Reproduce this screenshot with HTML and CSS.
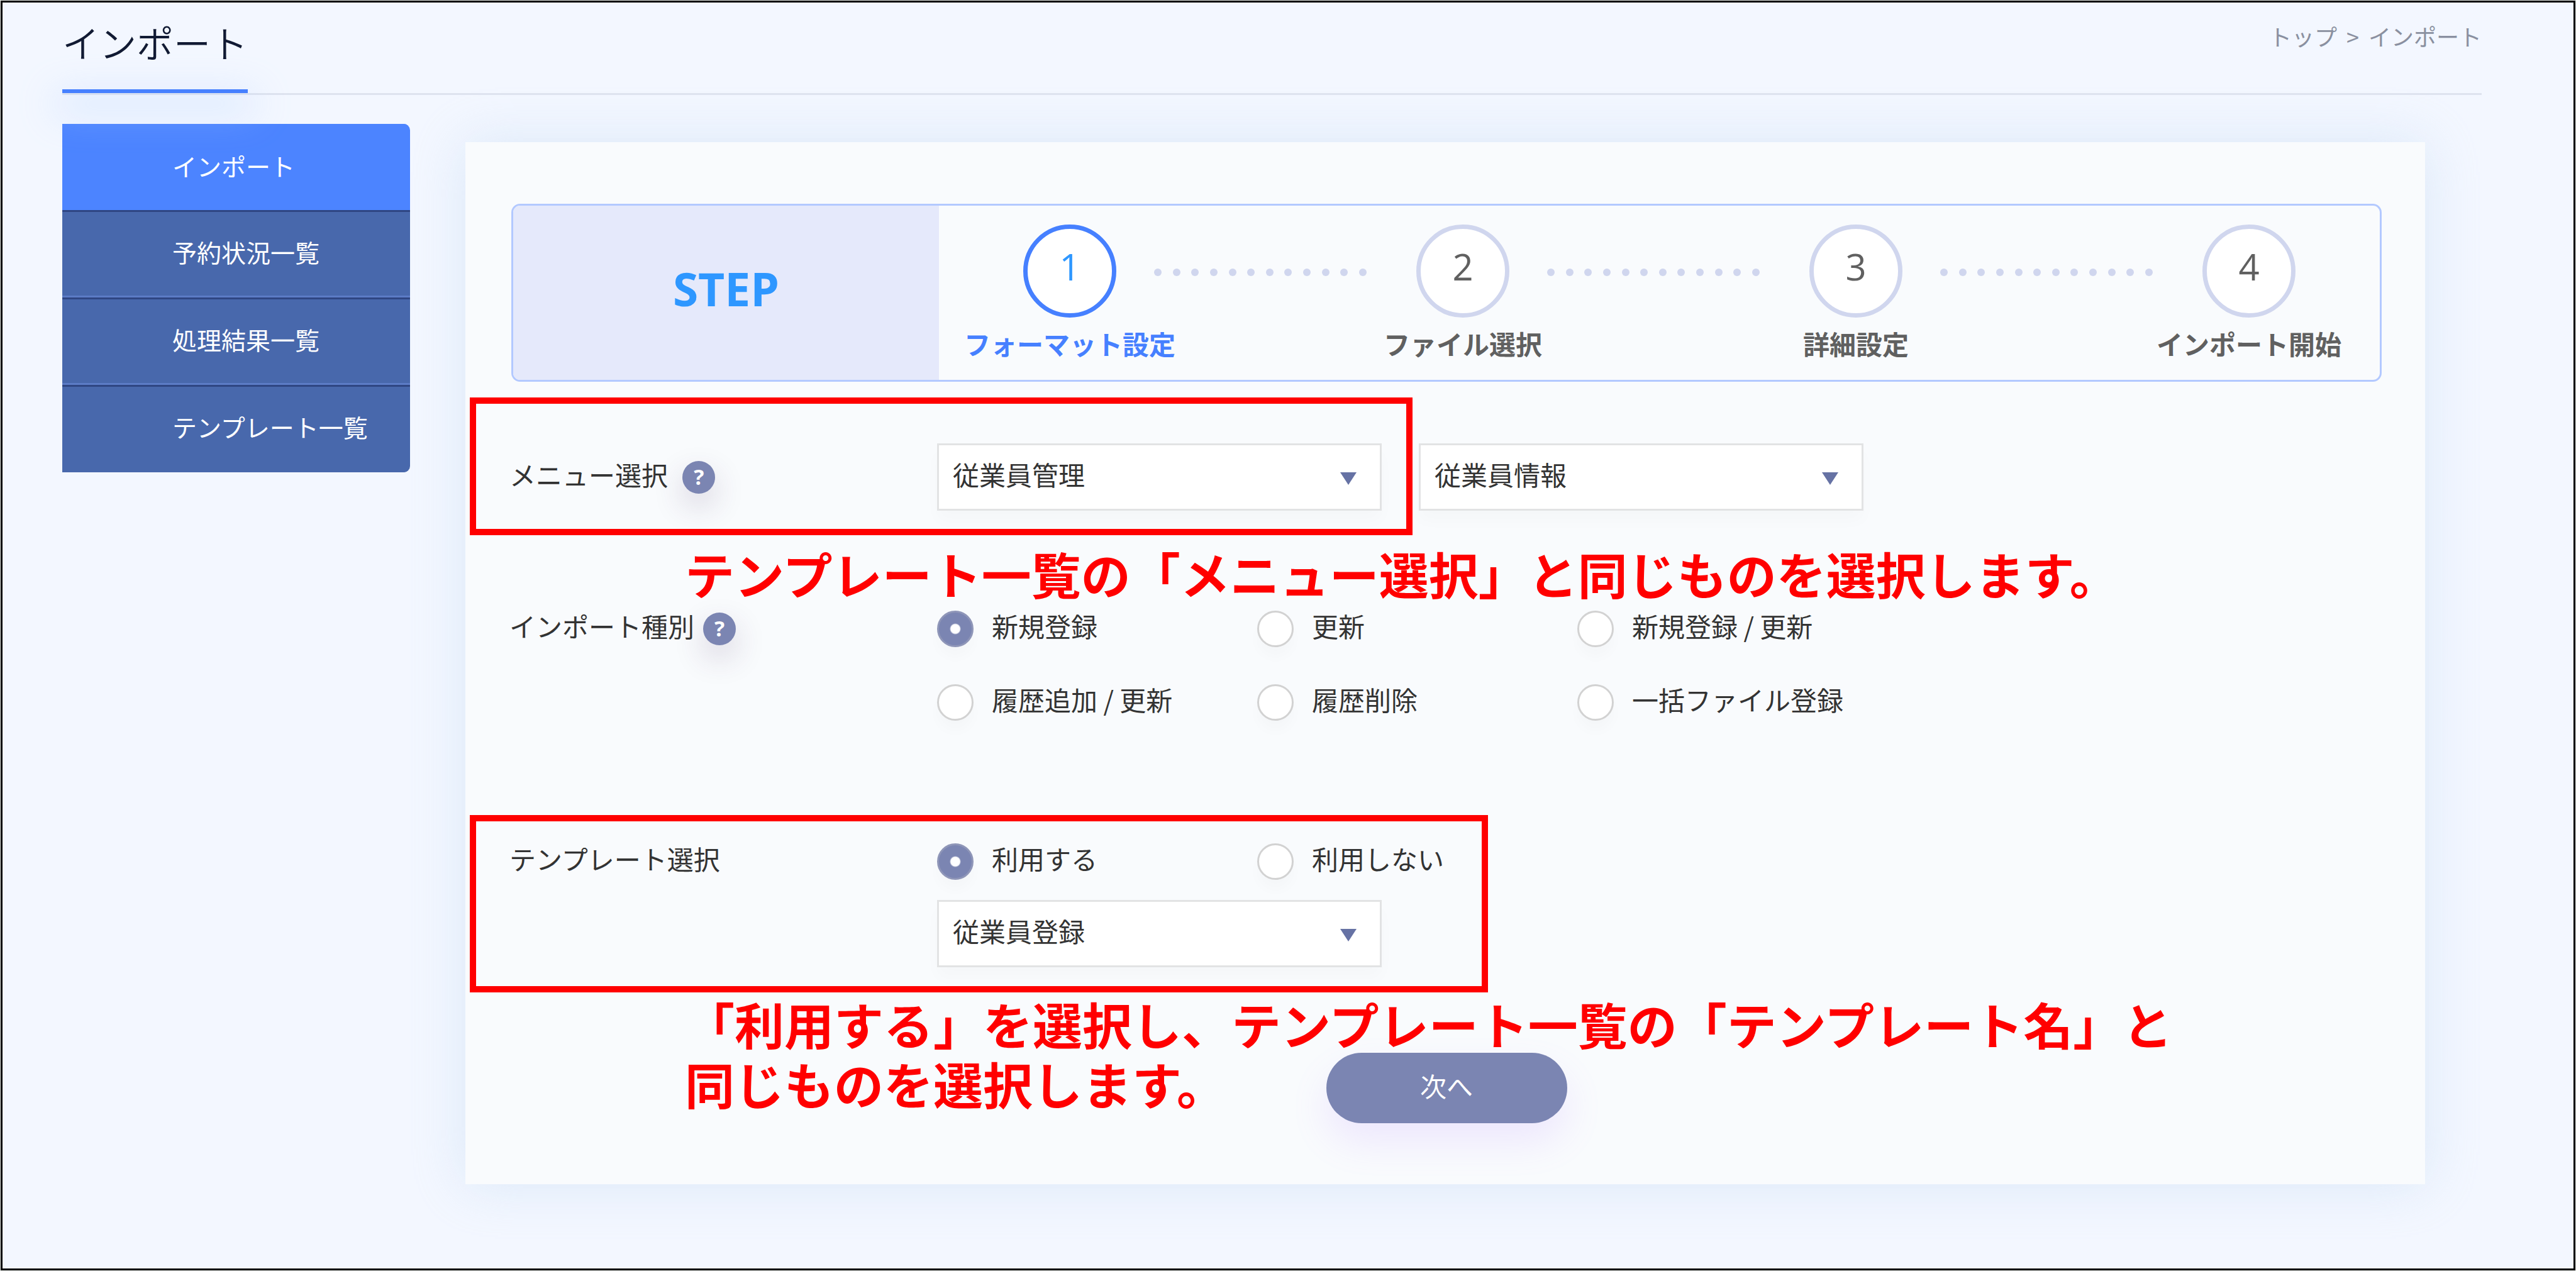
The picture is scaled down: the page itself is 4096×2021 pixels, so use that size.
FILE: index.html
```html
<!DOCTYPE html>
<html lang="ja">
<head>
<meta charset="utf-8">
<title>インポート</title>
<link rel="stylesheet" href="styles.css">
</head>
<body>
<div class="page">
  <header class="page-header">
    <h1 class="page-title">インポート</h1>
    <nav class="breadcrumb"><a href="#">トップ</a><span>&gt;</span><span>インポート</span></nav>
  </header>

  <div class="layout">
    <nav class="sidebar">
      <a class="sidebar-item is-active" href="#">インポート</a>
      <a class="sidebar-item" href="#">予約状況一覧</a>
      <a class="sidebar-item" href="#">処理結果一覧</a>
      <a class="sidebar-item" href="#">テンプレート一覧</a>
    </nav>

    <main class="panel">
      <section class="stepper">
        <div class="stepper-title">STEP</div>
        <div class="steps">
          <div class="step is-current"><span class="step-number">1</span><span class="step-label">フォーマット設定</span></div>
          <div class="dots"><i></i><i></i><i></i><i></i><i></i><i></i><i></i><i></i><i></i><i></i><i></i><i></i></div>
          <div class="step"><span class="step-number">2</span><span class="step-label">ファイル選択</span></div>
          <div class="dots"><i></i><i></i><i></i><i></i><i></i><i></i><i></i><i></i><i></i><i></i><i></i><i></i></div>
          <div class="step"><span class="step-number">3</span><span class="step-label">詳細設定</span></div>
          <div class="dots"><i></i><i></i><i></i><i></i><i></i><i></i><i></i><i></i><i></i><i></i><i></i><i></i></div>
          <div class="step"><span class="step-number">4</span><span class="step-label">インポート開始</span></div>
        </div>
      </section>

      <form class="form">
        <div class="row row-menu">
          <div class="row-label"><label class="caption" for="menu">メニュー選択&nbsp;</label><button class="help" type="button">?</button></div>
          <div class="selects">
            <div class="select"><select id="menu"><option>従業員管理</option></select></div>
            <div class="select"><select id="submenu" aria-label="従業員情報"><option>従業員情報</option></select></div>
          </div>
        </div>

        <div class="row row-type">
          <div class="row-label"><span class="caption">インポート種別</span><button class="help" type="button">?</button></div>
          <div class="radios">
            <label class="radio"><input type="radio" name="type" checked><span class="caption">新規登録</span></label>
            <label class="radio"><input type="radio" name="type"><span class="caption">更新</span></label>
            <label class="radio"><input type="radio" name="type"><span class="caption">新規登録 / 更新</span></label>
            <label class="radio"><input type="radio" name="type"><span class="caption">履歴追加 / 更新</span></label>
            <label class="radio"><input type="radio" name="type"><span class="caption">履歴削除</span></label>
            <label class="radio"><input type="radio" name="type"><span class="caption">一括ファイル登録</span></label>
          </div>
        </div>

        <div class="row row-template">
          <div class="row-label"><label class="caption" for="template">テンプレート選択</label></div>
          <div class="stack">
            <div class="radios">
              <label class="radio"><input type="radio" name="use" checked><span class="caption">利用する</span></label>
              <label class="radio"><input type="radio" name="use"><span class="caption">利用しない</span></label>
            </div>
            <div class="select"><select id="template"><option>従業員登録</option></select></div>
          </div>
        </div>

        <button class="next" type="button">次へ</button>
      </form>

      <div class="mark mark-menu"></div>
      <p class="note note-menu">テンプレート一覧の「メニュー選択」と同じものを選択します。</p>
      <div class="mark mark-template"></div>
      <p class="note note-template">「利用する」を選択し、テンプレート一覧の「テンプレート名」と<br>同じものを選択します。</p>
    </main>
  </div>
</div>
</body>
</html>
```
FILE: styles.css
```css
* {
  box-sizing: border-box;
}

html {
  background: #e8ece8;
}

body {
  margin: 0;
  padding: 1px;
  font-family: "Noto Sans CJK JP", sans-serif;
  font-size: 42px;
  color: #333;
}

a {
  color: inherit;
  text-decoration: none;
}

.page {
  min-height: calc(100vh - 2px);
  border: 3px solid #000;
  background: #f3f7ff;
}

/* Header */

.page-header {
  position: relative;
  z-index: 1;
  display: flex;
  justify-content: space-between;
  margin: 0 146px 0 95px;
  border-bottom: 3px solid #dee3ef;
}

.page-title {
  position: relative;
  height: 144px;
  margin: 0;
  font-size: 59px;
  font-weight: 350;
  line-height: 126px;
  color: #111a33;
}

.page-title::after {
  content: "";
  position: absolute;
  left: 0;
  right: 0;
  bottom: 0;
  height: 6px;
  background: #4680ff;
  box-shadow: 0 20px 60px 10px rgba(170, 205, 255, 0.45);
}

.breadcrumb {
  display: flex;
  gap: 15px;
  padding-top: 20px;
  font-size: 36px;
  line-height: 66px;
  color: #8a90a0;
}

/* Layout */

.layout {
  display: flex;
  align-items: flex-start;
  gap: 88px;
  padding: 46px 236px 134px 95px;
}

.sidebar {
  flex: none;
  width: 553px;
  border-radius: 0 10px 10px 0;
  overflow: hidden;
}

.sidebar-item {
  display: block;
  height: 139px;
  padding-left: 175px;
  border-top: 3px solid #2f4683;
  border-bottom: 3px solid #5c7cc6;
  background: #4868ac;
  font-size: 39px;
  line-height: 126px;
  color: #fff;
}

.sidebar-item.is-active {
  height: 137px;
  border-color: #4c84ff;
  background: #4c84ff;
}

.sidebar-item:last-child {
  border-bottom-color: #4868ac;
}

.panel {
  position: relative;
  flex: 1;
  margin-top: 29px;
  padding: 98px 69px 97px 73px;
  background: #f9fbfd;
  box-shadow: 0 0 80px rgba(190, 215, 240, 0.45);
}

/* Step indicator */

.stepper {
  display: flex;
  height: 283px;
  border: 3px solid #b3c9ff;
  border-radius: 14px;
  overflow: hidden;
}

.stepper-title {
  flex: none;
  display: flex;
  align-items: center;
  justify-content: center;
  width: 677px;
  padding-bottom: 14px;
  background: #e5e9fb;
  font-family: "Open Sans", sans-serif;
  font-size: 73px;
  font-weight: 700;
  color: #2e97ff;
}

.steps {
  flex: 1;
  display: flex;
  padding: 30px 134px 0;
}

.step {
  flex: none;
  display: flex;
  flex-direction: column;
  align-items: center;
  width: 148px;
  color: #606060;
}

.step-number {
  width: 148px;
  height: 148px;
  border: 7px solid #d0d6ee;
  border-radius: 50%;
  background: #fff;
  font-family: "Open Sans", sans-serif;
  font-size: 58px;
  line-height: 120px;
  text-align: center;
}

.step-label {
  margin-top: 10px;
  font-weight: 700;
  line-height: 62px;
  white-space: nowrap;
}

.step.is-current {
  color: #4680ff;
}

.is-current .step-number {
  border-color: #4680ff;
  color: #2e97ff;
}

.dots {
  flex: 1;
  display: flex;
  justify-content: space-between;
  margin: 70px 79px 0 60px;
}

.dots i {
  width: 12px;
  height: 12px;
  border-radius: 50%;
  background: #d0d6ee;
}

/* Form */

.form {
  display: flex;
  flex-direction: column;
}

.row {
  display: grid;
  grid-template-columns: 680px 1fr;
  margin-left: -3px;
}

.row-menu {
  margin-top: 98px;
}

.row-type {
  margin-top: 159px;
}

.row-template {
  margin-top: 195px;
}

.row-label {
  display: flex;
  align-items: center;
  gap: 14px;
  height: 58px;
}

.row-menu .row-label {
  height: 107px;
}

.caption {
  padding-bottom: 10px;
  line-height: 48px;
  white-space: nowrap;
}

.help {
  width: 52px;
  height: 52px;
  padding: 0 0 2px;
  border: 0;
  border-radius: 50%;
  background: #7b85b2;
  box-shadow: 0 20px 50px rgba(70, 40, 90, 0.2);
  font-family: "Open Sans", sans-serif;
  font-size: 34px;
  font-weight: 700;
  line-height: 48px;
  color: #fff;
}

.selects {
  display: flex;
  gap: 59px;
}

.select {
  position: relative;
  width: 707px;
}

.select::after {
  content: "";
  position: absolute;
  top: 46px;
  right: 40px;
  width: 26px;
  height: 20px;
  background: #6672a4;
  clip-path: polygon(0 0, 100% 0, 50% 100%);
  pointer-events: none;
}

.select select {
  display: block;
  width: 100%;
  height: 107px;
  padding: 0 80px 10px 22px;
  border: 3px solid #e2e3e4;
  border-radius: 0;
  appearance: none;
  background: #fff;
  box-shadow: 0 16px 24px rgba(0, 0, 0, 0.02);
  font-family: inherit;
  font-size: 42px;
  color: #333;
}

.radios {
  display: grid;
  grid-template-columns: repeat(3, 509px);
  row-gap: 59px;
}

.radio {
  display: flex;
  align-items: center;
  gap: 29px;
  height: 58px;
}

.radio input {
  flex: none;
  width: 58px;
  height: 58px;
  margin: 0;
  border: 3px solid #d2d2d2;
  border-radius: 50%;
  appearance: none;
  background: #fff;
  box-shadow: 0 16px 20px rgba(0, 0, 0, 0.02);
}

.radio input:checked {
  border-color: #8f96b8;
  background: radial-gradient(circle, #fff 7px, #7b85b2 9px);
}

.stack {
  display: grid;
  row-gap: 32px;
}

.next {
  align-self: center;
  width: 383px;
  height: 112px;
  margin-top: 136px;
  padding: 0 0 10px;
  border: 0;
  border-radius: 56px;
  background: #7b85b2;
  box-shadow: 0 30px 60px rgba(170, 110, 255, 0.14);
  font-family: inherit;
  font-size: 42px;
  color: #fff;
}

/* Red annotations laid over the form */

.mark {
  position: absolute;
  left: 7px;
  border: 10px solid #f00;
  pointer-events: none;
}

.mark-menu {
  top: 406px;
  width: 1499px;
  height: 219px;
}

.mark-template {
  top: 1070px;
  width: 1619px;
  height: 282px;
}

.note {
  position: absolute;
  left: 349px;
  margin: 0;
  font-size: 79px;
  font-weight: 700;
  line-height: 95px;
  white-space: nowrap;
  color: #f00;
  pointer-events: none;
}

.note-menu {
  top: 638px;
}

.note-template {
  top: 1354px;
}
```
